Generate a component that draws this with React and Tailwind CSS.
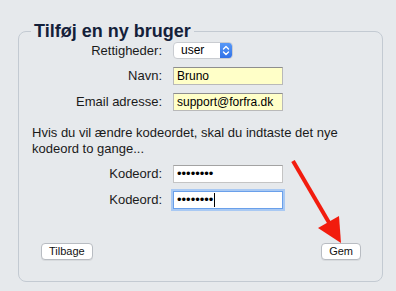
import React from 'react';

const Row = ({ label, children, className = '' }) => (
  <div className={`flex items-center ${className}`}>
    <label className="w-[131px] text-right text-[13px] leading-[16px] text-[#1a1a1a]">{label}</label>
    <div className="ml-[11px] flex">{children}</div>
  </div>
);

const TextBox = ({ value }) => (
  <input
    readOnly
    value={value}
    className="w-[110px] h-[18px] px-[3px] text-[12px] leading-[16px] text-black bg-[#ffffc8] border border-[#b9b9b9] border-t-[#8e8e8e] outline-none"
  />
);

const PasswordBox = ({ focused }) => (
  <div
    className={`w-[110px] h-[18px] px-[3px] flex items-center bg-white border text-[13px] leading-[16px] text-black ${
      focused ? 'border-[#6aa0ea] shadow-[0_0_0_2px_#a9c9f3]' : 'border-[#c4c4c4] border-t-[#a3a3a3]'
    }`}
  >
    <span>••••••••</span>
    {focused && <span className="ml-[1px] w-px h-[14px] bg-black"></span>}
  </div>
);

const Button = ({ children }) => (
  <button className="h-[17px] px-[7px] bg-white border border-[#b8bcc2] rounded-[4px] text-[11px] leading-[15px] text-[#111] shadow-[0_1px_0_rgba(0,0,0,0.06)]">
    {children}
  </button>
);

export default function App() {
  return (
    <div className="relative w-[396px] h-[291px] bg-[#e6e9ec] pt-[20px] font-['Liberation_Sans',Arial,sans-serif] overflow-hidden">
      <fieldset className="ml-[18px] w-[365px] h-[262px] border border-[#c3cad2] rounded-[8px] pl-[12px] pr-[12px] flex flex-col">
        <legend className="px-[3px] text-[18px] leading-[22px] font-bold text-[#14213a]">Tilføj en ny bruger</legend>

        <Row label="Rettigheder:">
          <div className="relative w-[60px] h-[17px] bg-white rounded-[4px] border border-[#c9ccd1] flex items-center overflow-hidden">
            <span className="pl-[7px] text-[12px] leading-[15px] text-black">user</span>
            <div className="absolute right-0 top-[-1px] bottom-[-1px] w-[12px] rounded-r-[4px] bg-gradient-to-b from-[#5a9bf8] to-[#2f6fe6] flex items-center justify-center">
              <svg width="8" height="11" viewBox="0 0 8 11" fill="none" stroke="white" strokeWidth="1.4" strokeLinecap="round" strokeLinejoin="round">
                <path d="M1.5 4 L4 1.5 L6.5 4" />
                <path d="M1.5 7 L4 9.5 L6.5 7" />
              </svg>
            </div>
          </div>
        </Row>

        <Row label="Navn:" className="mt-[8px]">
          <TextBox value="Bruno" />
        </Row>

        <Row label="Email adresse:" className="mt-[8px]">
          <TextBox value="support@forfra.dk" />
        </Row>

        <p className="mt-[14px] ml-[1px] text-[13px] leading-[16px] text-[#1a1a1a]">
          Hvis du vil ændre kodeordet, skal du indtaste det nye kodeord to gange...
        </p>

        <Row label="Kodeord:" className="mt-[8px]">
          <PasswordBox />
        </Row>

        <Row label="Kodeord:" className="mt-[8px]">
          <PasswordBox focused />
        </Row>

        <div className="mt-[34px] flex justify-between pl-[10px] pr-[9px]">
          <Button>Tilbage</Button>
          <Button>Gem</Button>
        </div>
      </fieldset>

      <svg className="absolute left-0 top-0 pointer-events-none" width="396" height="291" viewBox="0 0 396 291">
        <line x1="293" y1="161" x2="331" y2="226" stroke="#f21c0e" strokeWidth="4" />
        <polygon points="341,243 339,216 318,228" fill="#f21c0e" />
      </svg>
    </div>
  );
}
